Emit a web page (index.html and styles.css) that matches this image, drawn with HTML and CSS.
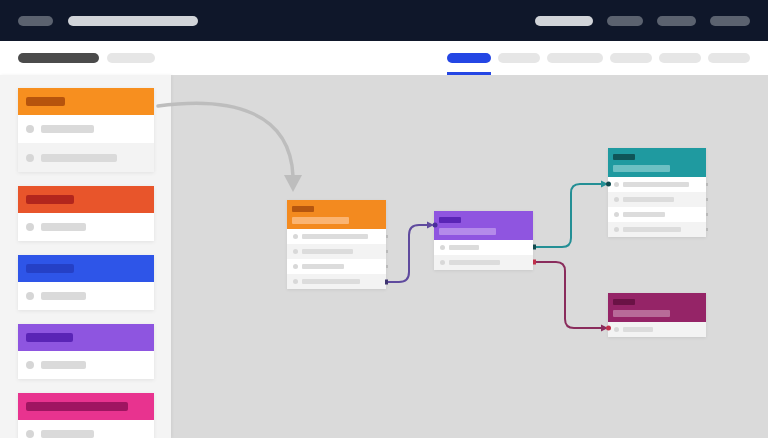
FILE: index.html
```html
<!DOCTYPE html>
<html>
<head>
<meta charset="utf-8">
<link rel="stylesheet" href="styles.css">
</head>
<body>
<div class="app">
  <header class="topbar">
    <div class="group">
      <span class="pill p-dark w35"></span>
      <span class="pill p-light w130"></span>
    </div>
    <div class="group right">
      <span class="pill p-light w58"></span>
      <span class="pill p-dark w36"></span>
      <span class="pill p-dark w39"></span>
      <span class="pill p-dark w40"></span>
    </div>
  </header>
  <nav class="subbar">
    <div class="group">
      <span class="pill s-dark w81"></span>
      <span class="pill s-light w48"></span>
    </div>
    <div class="tabs">
      <span class="tab active"><span class="pill s-blue w44"></span></span>
      <span class="tab"><span class="pill s-light w42"></span></span>
      <span class="tab"><span class="pill s-light w56"></span></span>
      <span class="tab"><span class="pill s-light w42"></span></span>
      <span class="tab"><span class="pill s-light w42"></span></span>
      <span class="tab"><span class="pill s-light w42"></span></span>
    </div>
  </nav>
  <main class="main">
    <aside class="sidebar">
      <div class="card">
        <div class="card-head orange"><span class="label w39"></span></div>
        <div class="card-row"><span class="dot"></span><span class="bar w53"></span></div>
        <div class="card-row alt"><span class="dot"></span><span class="bar w76"></span></div>
      </div>
      <div class="card">
        <div class="card-head red"><span class="label w48"></span></div>
        <div class="card-row"><span class="dot"></span><span class="bar w45"></span></div>
      </div>
      <div class="card">
        <div class="card-head blue"><span class="label w48"></span></div>
        <div class="card-row"><span class="dot"></span><span class="bar w45"></span></div>
      </div>
      <div class="card">
        <div class="card-head purple"><span class="label w47"></span></div>
        <div class="card-row"><span class="dot"></span><span class="bar w45"></span></div>
      </div>
      <div class="card">
        <div class="card-head pink"><span class="label w102"></span></div>
        <div class="card-row"><span class="dot"></span><span class="bar w53"></span></div>
      </div>
    </aside>
    <section class="canvas">
      <div class="node n-orange" style="left:116px;top:125px">
        <div class="node-head"><span class="nl-dark"></span><span class="nl-light"></span></div>
        <div class="node-row"><span class="ndot"></span><span class="nbar" style="width:66px"></span><span class="port"></span></div>
        <div class="node-row alt"><span class="ndot"></span><span class="nbar" style="width:51px"></span><span class="port"></span></div>
        <div class="node-row"><span class="ndot"></span><span class="nbar" style="width:42px"></span><span class="port"></span></div>
        <div class="node-row alt"><span class="ndot"></span><span class="nbar" style="width:58px"></span></div>
      </div>
      <div class="node n-purple" style="left:263px;top:136px">
        <div class="node-head"><span class="nl-dark"></span><span class="nl-light"></span></div>
        <div class="node-row"><span class="ndot"></span><span class="nbar" style="width:30px"></span></div>
        <div class="node-row alt"><span class="ndot"></span><span class="nbar" style="width:51px"></span></div>
      </div>
      <div class="node n-teal" style="left:437px;top:73px">
        <div class="node-head"><span class="nl-dark"></span><span class="nl-light"></span></div>
        <div class="node-row"><span class="ndot"></span><span class="nbar" style="width:66px"></span><span class="port"></span></div>
        <div class="node-row alt"><span class="ndot"></span><span class="nbar" style="width:51px"></span><span class="port"></span></div>
        <div class="node-row"><span class="ndot"></span><span class="nbar" style="width:42px"></span><span class="port"></span></div>
        <div class="node-row alt"><span class="ndot"></span><span class="nbar" style="width:58px"></span><span class="port"></span></div>
      </div>
      <div class="node n-maroon" style="left:437px;top:218px">
        <div class="node-head"><span class="nl-dark"></span><span class="nl-light"></span></div>
        <div class="node-row alt"><span class="ndot"></span><span class="nbar" style="width:30px"></span></div>
      </div>
    </section>
  </main>
  <svg class="wires" width="768" height="438" viewBox="0 0 768 438">
    <path d="M158 106 C 232 96, 290 112, 293 176" fill="none" stroke="#bdbdbd" stroke-width="3.5" stroke-linecap="round"/>
    <polygon points="284,175 302,175 293,192" fill="#bdbdbd"/>

    <path d="M387 282 H399 Q409 282 409 272 V235 Q409 225 419 225 H429" fill="none" stroke="#5f4a9e" stroke-width="2"/>
    <rect x="385" y="279.5" width="3" height="5" fill="#3f3470"/>
    <polygon points="427,221.5 434,225 427,228.5" fill="#5f4a9e"/>
    <circle cx="435" cy="225" r="2.5" fill="#4a2f9a"/>

    <path d="M535 247 H562 Q571 247 571 238 V193 Q571 184 580 184 H602" fill="none" stroke="#238f95" stroke-width="2"/>
    <rect x="533" y="244.5" width="3" height="5" fill="#124a4e"/>
    <polygon points="601,180.5 608,184 601,187.5" fill="#238f95"/>
    <circle cx="608.5" cy="184" r="2.5" fill="#124a4e"/>

    <path d="M535 262 H556 Q565 262 565 271 V319 Q565 328 574 328 H602" fill="none" stroke="#8a2c5c" stroke-width="2"/>
    <rect x="533" y="259.5" width="3" height="5" fill="#c0304a"/>
    <polygon points="601,324.5 608,328 601,331.5" fill="#8a2c5c"/>
    <circle cx="608.5" cy="328" r="2.5" fill="#c0304a"/>
  </svg>
</div>
</body>
</html>
```

FILE: styles.css
```css
* { box-sizing: border-box; }
html, body { margin: 0; padding: 0; }
body {
  width: 768px;
  height: 438px;
  overflow: hidden;
  font-family: "Liberation Sans", Arial, sans-serif;
  background: #dadada;
}
.app { position: relative; width: 768px; height: 438px; overflow: hidden; }

.pill { display: block; height: 10px; border-radius: 5px; }
.group { display: flex; align-items: center; gap: 15px; }

.topbar {
  height: 41px;
  background: #0f172a;
  display: flex;
  align-items: center;
  justify-content: space-between;
  padding: 0 18px 0 18px;
}
.topbar .group.right { gap: 14px; }
.p-dark { background: #5b626f; }
.p-light { background: #d1d4d9; }

.subbar {
  height: 34px;
  background: #ffffff;
  display: flex;
  align-items: stretch;
  justify-content: space-between;
  padding: 0 18px;
}
.subbar .group { gap: 8px; }
.s-dark { background: #4b4b4b; }
.s-light { background: #e6e6e6; }
.s-blue { background: #2446e4; }

.tabs { display: flex; gap: 7px; align-items: stretch; }
.tab {
  display: flex;
  align-items: center;
  border-bottom: 3px solid transparent;
  padding-top: 3px;
}
.tab.active { border-bottom-color: #2446e4; }

.w35 { width: 35px; } .w130 { width: 130px; } .w58 { width: 58px; }
.w36 { width: 36px; } .w39 { width: 39px; } .w40 { width: 40px; }
.w81 { width: 81px; } .w48 { width: 48px; } .w44 { width: 44px; }
.w42 { width: 42px; } .w56 { width: 56px; } .w53 { width: 53px; }
.w76 { width: 76px; } .w45 { width: 45px; } .w47 { width: 47px; }
.w102 { width: 102px; }

.main { display: flex; height: 363px; }

.sidebar {
  width: 171px;
  flex: none;
  background: #f4f4f4;
  padding: 13px 0 0 18px;
  display: flex;
  flex-direction: column;
  gap: 14px;
  box-shadow: 1px 0 3px rgba(0,0,0,0.06);
  position: relative;
  z-index: 1;
}
.card {
  width: 136px;
  background: #fff;
  box-shadow: 0 1px 4px rgba(0,0,0,0.08);
  flex: none;
}
.card-head {
  height: 27px;
  display: flex;
  align-items: center;
  padding-left: 8px;
}
.card-head .label { display: block; height: 9px; border-radius: 2px; }
.orange { background: #f78f1f; } .orange .label { background: #b6540d; }
.red { background: #e8552b; } .red .label { background: #b2261d; }
.blue { background: #2e55e8; } .blue .label { background: #2540c6; }
.purple { background: #8e55e0; } .purple .label { background: #5a24b6; }
.pink { background: #e8338f; } .pink .label { background: #9f1561; }

.card-row {
  height: 28px;
  display: flex;
  align-items: center;
  padding-left: 8px;
  gap: 7px;
  background: #fff;
}
.card-row.alt { background: #f3f3f3; height: 29px; }
.dot { width: 8px; height: 8px; border-radius: 50%; background: #d6d6d6; flex: none; }
.bar { display: block; height: 8px; border-radius: 2px; background: #dadada; }

.canvas {
  flex: 1;
  background: #dadada;
  position: relative;
}

.node {
  position: absolute;
  width: 99px;
  background: #fff;
  box-shadow: 0 1px 3px rgba(0,0,0,0.08);
}
.node-head {
  height: 29px;
  display: flex;
  flex-direction: column;
  justify-content: center;
  gap: 5px;
  padding-left: 5px;
}
.nl-dark { display: block; width: 22px; height: 6px; border-radius: 1px; }
.nl-light { display: block; width: 57px; height: 7px; border-radius: 1px; }
.n-orange .node-head { background: #f38a1f; }
.n-orange .nl-dark { background: #b5560f; }
.n-orange .nl-light { background: #fbb471; }
.n-purple .node-head { background: #8f55e0; }
.n-purple .nl-dark { background: #5a25b6; }
.n-purple .nl-light { background: #b48aea; }
.n-teal { width: 98px; }
.n-teal .node-head { background: #1f9aa0; }
.n-teal .nl-dark { background: #0f5558; }
.n-teal .nl-light { background: #6cc0c3; }
.n-maroon { width: 98px; }
.n-maroon .node-head { background: #952467; }
.n-maroon .nl-dark { background: #6a1245; }
.n-maroon .nl-light { background: #b86b99; }

.node-row {
  height: 15px;
  display: flex;
  align-items: center;
  padding-left: 6px;
  gap: 4px;
  background: #fff;
  position: relative;
}
.node-row.alt { background: #f3f3f3; }
.ndot { width: 5px; height: 5px; border-radius: 50%; background: #d8d8d8; flex: none; }
.nbar { display: block; height: 5px; border-radius: 1px; background: #dcdcdc; }
.port {
  position: absolute;
  right: -2px;
  top: 6px;
  width: 2px;
  height: 3px;
  background: #b9b9b9;
}

.wires {
  position: absolute;
  left: 0;
  top: 0;
  pointer-events: none;
  z-index: 2;
}
```
